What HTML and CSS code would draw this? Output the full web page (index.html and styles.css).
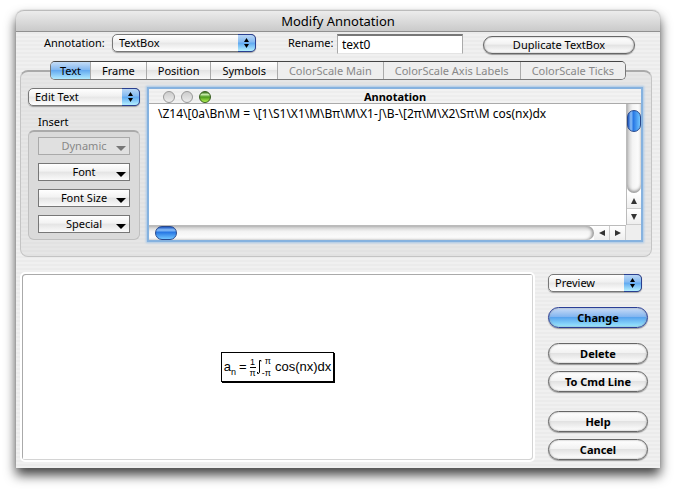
FILE: index.html
```html
<!DOCTYPE html>
<html lang="en">

<head>
    <meta charset="UTF-8">
    <meta name="viewport" content="width=device-width, initial-scale=1.0">
    <title>Modify Annotation</title>
    <link rel="stylesheet" href="styles.css">
</head>

<body>

    <main class="window">
        <h1 class="titlebar">Modify Annotation</h1>

        <div class="top-row">
            <label class="annotation-label" for="annotation">Annotation:</label>
            <div class="popup popup-annotation">
                <select id="annotation"><option>TextBox</option></select>
                <svg class="arrows" viewBox="0 0 16 16"><path d="M8 3l2.500 4h-5zM5.500 9h5L8 13z"/></svg>
            </div>
            <label class="rename-label" for="rename">Rename:</label>
            <input class="rename" id="rename" type="text" value="text0">
            <button class="pill duplicate" type="button">Duplicate TextBox</button>
        </div>

        <div class="tabs" role="tablist">
            <button class="tab active" type="button" role="tab" aria-selected="true">Text</button>
            <button class="tab" type="button" role="tab">Frame</button>
            <button class="tab" type="button" role="tab">Position</button>
            <button class="tab" type="button" role="tab">Symbols</button>
            <button class="tab" type="button" role="tab" disabled>ColorScale Main</button>
            <button class="tab" type="button" role="tab" disabled>ColorScale Axis Labels</button>
            <button class="tab" type="button" role="tab" disabled>ColorScale Ticks</button>
        </div>

        <section class="panel">
            <div class="side">
                <div class="popup">
                    <select aria-label="Edit mode"><option>Edit Text</option></select>
                    <svg class="arrows" viewBox="0 0 16 16"><path d="M8 3l2.500 4h-5zM5.500 9h5L8 13z"/></svg>
                </div>
                <h2 class="insert-title">Insert</h2>
                <div class="insert-group">
                    <button class="menu-button" type="button" disabled>Dynamic</button>
                    <button class="menu-button" type="button">Font</button>
                    <button class="menu-button" type="button">Font Size</button>
                    <button class="menu-button" type="button">Special</button>
                </div>
            </div>

            <div class="editor">
                <div class="editor-bar">
                    <div class="lights">
                        <span class="light"></span>
                        <span class="light"></span>
                        <span class="light green"></span>
                    </div>
                    <label for="source">Annotation</label>
                </div>
                <textarea class="source" id="source" spellcheck="false" wrap="off">\Z14\[0a\Bn\M = \[1\S1\X1\M\Bπ\M\X1-∫\B-\[2π\M\X2\Sπ\M cos(nx)dx</textarea>
                <div class="scroll-v">
                    <div class="track"><div class="thumb"></div></div>
                    <button class="step" type="button" aria-label="Scroll up"><svg viewBox="0 0 8 8"><path d="M4 1l3 6H1z"/></svg></button>
                    <button class="step" type="button" aria-label="Scroll down"><svg viewBox="0 0 8 8"><path d="M4 7l3-6H1z"/></svg></button>
                </div>
                <div class="scroll-h">
                    <div class="track"><div class="thumb"></div></div>
                    <button class="step" type="button" aria-label="Scroll left"><svg viewBox="0 0 8 8"><path d="M1 4l6-3v6z"/></svg></button>
                    <button class="step" type="button" aria-label="Scroll right"><svg viewBox="0 0 8 8"><path d="M7 4L1 1v6z"/></svg></button>
                </div>
                <div class="corner"></div>
            </div>
        </section>

        <div class="bottom">
            <div class="preview">
                <div class="formula">
                    <span>a</span><span class="sub">n</span>
                    <span class="equals">=</span>
                    <span class="fraction"><span class="over">1</span><span>π</span></span>
                    <svg class="integral" viewBox="0 0 6 16"><path d="M5 2.500V1.500H3.500V13.500Q3.500 14.500 1.500 14.500V13"/></svg>
                    <span class="limits"><span>π</span><span>-π</span></span>
                    <span class="integrand">cos(nx)dx</span>
                </div>
            </div>

            <div class="actions">
                <div class="popup popup-preview">
                    <select aria-label="Preview mode"><option>Preview</option></select>
                    <svg class="arrows" viewBox="0 0 16 16"><path d="M8 3l2.500 4h-5zM5.500 9h5L8 13z"/></svg>
                </div>
                <button class="pill action change" type="button">Change</button>
                <button class="pill action" type="button">Delete</button>
                <button class="pill action" type="button">To Cmd Line</button>
                <button class="pill action help" type="button">Help</button>
                <button class="pill action" type="button">Cancel</button>
            </div>
        </div>
    </main>

</body>

</html>
```

FILE: styles.css
```css
* {
    box-sizing: border-box;
}

body {
    margin: 0;
    padding: 10px 16px 24px;
    background: #fff;
    color: #000;
    font-family: "Noto Sans", "Open Sans", sans-serif;
    font-size: 11px;
    line-height: 16px;
    overflow: hidden;
}

button,
input,
select,
textarea {
    margin: 0;
    font: inherit;
    color: inherit;
}

.window {
    border-radius: 8px 8px 0 0;
    background: repeating-linear-gradient(#f0f0f0 0 2px, #ebebeb 2px 4px);
    box-shadow: 0 0 1px #777, 0 7px 12px rgba(0, 0, 0, 0.75);
}

.titlebar {
    margin: 0;
    height: 22px;
    border-top: 1px solid #bbb;
    border-bottom: 1px solid #909090;
    border-radius: 8px 8px 0 0;
    background: linear-gradient(#ececec, #cacaca);
    font-size: 13px;
    font-weight: normal;
    line-height: 20px;
    text-align: center;
}

/* Controls above the tabs */

.top-row {
    display: flex;
    align-items: flex-start;
    padding: 2px 25px 0 28px;
    height: 29px;
}

.annotation-label,
.rename-label {
    line-height: 18px;
}

.annotation-label {
    width: 68px;
}

.rename-label {
    margin-left: 32px;
    width: 49px;
}

.rename {
    width: 126px;
    height: 20px;
    padding: 0 4px;
    border: 1px solid #aaa;
    border-top: 2px solid #777;
    border-bottom-color: #e4e4e4;
    border-radius: 0;
    background: #fff;
    font-size: 12px;
}

.popup {
    position: relative;
    height: 18px;
}

.popup select {
    display: block;
    width: 100%;
    height: 18px;
    padding: 0 22px 0 6px;
    appearance: none;
    border: 1px solid #777;
    border-radius: 5px;
    background: linear-gradient(#fff, #f0f0f0 45%, #e6e6e6 50%, #fff);
    box-shadow: 0 1px 1px rgba(0, 0, 0, 0.3);
    line-height: 16px;
}

.popup-annotation {
    width: 144px;
}

.popup-preview {
    width: 94px;
}

.arrows {
    position: absolute;
    top: 0;
    right: 0;
    width: 18px;
    height: 18px;
    border: 1px solid #2a3f8f;
    border-left: 0;
    border-radius: 0 5px 5px 0;
    background: linear-gradient(#b9d6f5, #82b9f2 45%, #5fa8f0 50%, #b4f0ff);
    pointer-events: none;
}

.pill {
    padding: 0;
    border: 1px solid #666;
    border-radius: 11px;
    background: linear-gradient(#fff, #f2f2f2 45%, #e2e2e2 50%, #fff);
    box-shadow: 0 1px 1px rgba(0, 0, 0, 0.35), inset 0 0 2px #999;
}

.duplicate {
    margin-top: 2px;
    margin-left: auto;
    width: 152px;
    height: 18px;
    line-height: 16px;
}

/* Tabs and their panel */

.tabs {
    position: relative;
    display: flex;
    width: max-content;
    margin: 0 auto;
    border: 1px solid #777;
    border-top-color: #444;
    border-radius: 5px;
    overflow: hidden;
}

.tab {
    height: 17px;
    padding: 0 11px;
    border: 0;
    border-left: 1px solid #aaa;
    background: linear-gradient(#fff, #f0f0f0 45%, #e4e4e4 50%, #fafafa);
    line-height: 17px;
}

.tab:disabled {
    background: #eee;
    color: #888;
}

.tab.active {
    padding: 0 9px;
    border-left: 0;
    background: linear-gradient(#c4dcf6, #84b8f0 45%, #64aaf0 50%, #b0eaff);
}

.panel {
    display: flex;
    gap: 9px;
    margin: -10px 8px 0 4px;
    padding: 16px 10px 16px 7px;
    border: 1px solid #c4c4c4;
    border-top: 2px solid #aaa;
    border-radius: 8px;
    background: repeating-linear-gradient(#e6e6e6 0 2px, #e2e2e2 2px 4px);
}

.side {
    flex: 0 0 112px;
}

.insert-title {
    margin: 8px 0 0 10px;
    font-size: 11px;
    font-weight: normal;
    line-height: 16px;
}

.insert-group {
    display: grid;
    gap: 8px;
    padding: 5px 9px 6px;
    border: 1px solid #c0c0c0;
    border-top: 2px solid #aaa;
    border-radius: 6px;
    background: #dadada;
}

.menu-button {
    position: relative;
    height: 18px;
    padding: 0;
    border: 1px solid #777;
    background: linear-gradient(#fff, #f2f2f2 45%, #e4e4e4 50%, #fafafa);
    line-height: 16px;
}

.menu-button::after {
    content: "";
    position: absolute;
    top: 8px;
    right: 3px;
    border: 5px solid transparent;
    border-top-color: #000;
    border-bottom: 0;
}

.menu-button:disabled {
    border-color: #aaa;
    background: #e0e0e0;
    color: #888;
}

.menu-button:disabled::after {
    border-top-color: #777;
}

/* Text editor with its own scroll bars */

.editor {
    flex: 1;
    min-width: 0;
    display: grid;
    grid-template-columns: 1fr 15px;
    grid-template-rows: 15px 1fr 15px;
    margin-top: 1px;
    background: #fff;
    box-shadow: 0 0 0 2px #86b2df, 0 0 2px 3px #a8c8e8;
}

.editor-bar {
    grid-column: 1 / 3;
    position: relative;
    border-bottom: 1px solid #aaa;
    background: repeating-linear-gradient(#f2f2f2 0 2px, #ededed 2px 4px);
    font-weight: bold;
    line-height: 15px;
    text-align: center;
}

.lights {
    position: absolute;
    top: 2px;
    left: 14px;
    display: flex;
    gap: 6px;
}

.light {
    width: 12px;
    height: 12px;
    border: 1px solid #999;
    border-radius: 50%;
    background: linear-gradient(#ccc, #ececec);
}

.light.green {
    border-color: #355c1c;
    background: linear-gradient(#2f6b12, #c4e8a8 25%, #4c9a1c 50%, #b4f455);
}

.source {
    display: block;
    width: 100%;
    height: 100%;
    padding: 2px 9px;
    border: 0;
    outline: 0;
    resize: none;
    overflow: hidden;
    background: #fff;
    font-size: 12px;
}

.scroll-v {
    display: flex;
    flex-direction: column;
    border-left: 1px solid #bbb;
}

.scroll-h {
    display: flex;
    border-top: 1px solid #bbb;
}

.track {
    flex: 1;
}

.scroll-v .track {
    padding-top: 6px;
    border-radius: 0 0 8px 8px;
    background: linear-gradient(90deg, #ccc, #f4f4f4 40%, #fff);
    box-shadow: inset 0 -2px 3px #999;
}

.scroll-h .track {
    padding-left: 6px;
    border-radius: 0 8px 8px 0;
    background: linear-gradient(#ccc, #f4f4f4 40%, #fff);
    box-shadow: inset -2px 0 3px #999;
}

.thumb {
    border: 1px solid #27488c;
    border-radius: 7px;
}

.scroll-v .thumb {
    width: 14px;
    height: 22px;
    background: linear-gradient(90deg, #1c55c0, #8cc0f8 25%, #2878e4 45%, #70c4ff);
}

.scroll-h .thumb {
    width: 22px;
    height: 14px;
    background: linear-gradient(#1c55c0, #8cc0f8 25%, #2878e4 45%, #70c4ff);
}

.step {
    display: flex;
    align-items: center;
    justify-content: center;
    width: 16px;
    height: 14px;
    padding: 0;
    border: 0;
    background: linear-gradient(#fff, #eee);
}

.step svg {
    width: 8px;
    height: 8px;
    fill: #333;
}

.scroll-v .step {
    width: 14px;
    height: 16px;
    border-bottom: 1px solid #ccc;
}

.scroll-h .step {
    border-right: 1px solid #ccc;
}

.corner {
    background: #eee;
}

/* Preview and dialog buttons */

.bottom {
    display: flex;
    gap: 13px;
    padding: 15px 12px 6px 4px;
}

.preview {
    flex: 1;
    display: flex;
    align-items: center;
    justify-content: center;
    border: 2px solid #fff;
    border-radius: 5px;
    background: #fff;
    box-shadow: inset 1px 1px 0 #aaa, inset -1px -1px 0 #d4d4d4;
}

.formula {
    display: flex;
    align-items: center;
    height: 30px;
    padding: 0 2px;
    border: 1px solid #000;
    box-shadow: 1px 1px 0 #000;
    font-family: "Liberation Sans", Arial, sans-serif;
    font-size: 13px;
    line-height: 16px;
}

.sub {
    padding-top: 10px;
    font-size: 9px;
}

.equals {
    margin: 0 3px;
}

.fraction,
.limits {
    display: flex;
    flex-direction: column;
    font-size: 9px;
    line-height: 10px;
    text-align: center;
}

.over {
    border-bottom: 1px solid #000;
}

.integral {
    width: 6px;
    height: 16px;
    fill: none;
    stroke: #000;
}

.limits {
    line-height: 12px;
    text-align: right;
}

.integrand {
    margin-left: 4px;
}

.actions {
    flex: 0 0 100px;
    padding: 2px 0;
}

.action {
    display: block;
    width: 100%;
    height: 21px;
    margin-top: 7px;
    font-weight: bold;
    line-height: 19px;
}

.change {
    margin: 15px 0;
    border-color: #2b3f96;
    background: linear-gradient(#cadcf6, #84b6f0 45%, #58a4ee 50%, #9ceaff);
}

.help {
    margin-top: 19px;
}
```
